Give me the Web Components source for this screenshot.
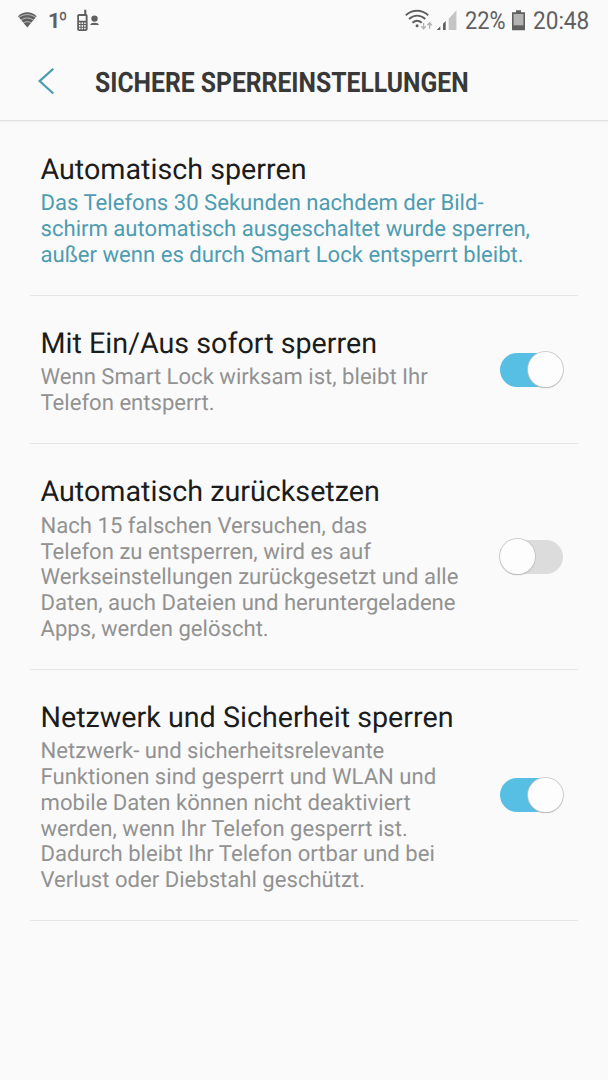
<!DOCTYPE html>
<html lang="de">
<head>
<meta charset="utf-8">
<title>Sichere Sperreinstellungen</title>
<style>
body{margin:0;background:#fafafa;font-family:Roboto,"Liberation Sans",sans-serif;text-rendering:geometricPrecision}
</style>
</head>
<body>
<settings-screen>
  <status-bar></status-bar>
  <title-bar></title-bar>
  <setting-row style="--h:175px;--top:31px;--gap:3px" accent>
    <span slot="title">Automatisch sperren</span>
    Das Telefons 30 Sekunden nachdem der Bild-<br>schirm automatisch ausgeschaltet wurde sperren,<br>außer wenn es durch Smart Lock entsperrt bleibt.
  </setting-row>
  <setting-row style="--h:148px;--top:29.5px">
    <span slot="title">Mit Ein/Aus sofort sperren</span>
    Wenn Smart Lock wirksam ist, bleibt Ihr<br>Telefon entsperrt.
    <toggle-switch slot="control" on></toggle-switch>
  </setting-row>
  <setting-row style="--h:226px;--top:30px">
    <span slot="title">Automatisch zurücksetzen</span>
    Nach 15 falschen Versuchen, das<br>Telefon zu entsperren, wird es auf<br>Werkseinstellungen zurückgesetzt und alle<br>Daten, auch Dateien und heruntergeladene<br>Apps, werden gelöscht.
    <toggle-switch slot="control"></toggle-switch>
  </setting-row>
  <setting-row style="--h:251px;--top:29.5px">
    <span slot="title">Netzwerk und Sicherheit sperren</span>
    Netzwerk- und sicherheitsrelevante<br>Funktionen sind gesperrt und WLAN und<br>mobile Daten können nicht deaktiviert<br>werden, wenn Ihr Telefon gesperrt ist.<br>Dadurch bleibt Ihr Telefon ortbar und bei<br>Verlust oder Diebstahl geschützt.
    <toggle-switch slot="control" on></toggle-switch>
  </setting-row>
</settings-screen>
<script>
function define(name, html, setup) {
  customElements.define(name, class extends HTMLElement {
    constructor() {
      super();
      this.attachShadow({mode: 'open'}).innerHTML = html;
    }
    connectedCallback() { if (setup) setup(this); }
  });
}

// Text condensed horizontally to the width given in its "width" attribute.
define('fit-text', `<style>
:host{display:block;white-space:nowrap;flex:none}
span{display:inline-block;transform-origin:0 50%}
</style><span><slot></slot></span>`, el => {
  const span = el.shadowRoot.querySelector('span');
  const width = Number(el.getAttribute('width'));
  el.style.width = width + 'px';
  span.style.transform = `scaleX(${width / span.offsetWidth})`;
});

define('settings-screen', `<style>
:host{display:block;width:608px;height:1080px;overflow:hidden;background:#fafafa}
</style><slot></slot>`);

define('status-bar', `<style>
:host{display:flex;height:42px;align-items:flex-start;color:#606060}
svg{display:block;flex:none}
.gap{flex:1}
fit-text{line-height:44px;height:42px}
</style>
<svg width="104" height="42" viewBox="0 0 104 42" fill="#606060">
  <path d="M27.300 27.5 18 16.3C23 10.8 31.5 10.8 36.700 16.3Z"/>
  <path d="M18.6 17.6C24 13.600 30.5 13.600 36 17.6M20.7 20.4C25 17.200 29.5 17.200 33.8 20.4M23 23.2C26 21.200 28.4 21.200 31.4 23.2" fill="none" stroke="#fafafa" stroke-width="1" opacity=".6"/>
  <text x="48" y="28" font-size="21.5" font-weight="700" font-family="Roboto" textLength="10">1</text>
  <text x="58.800" y="28" font-size="22.500" font-weight="400" font-family="Roboto" textLength="8.500" lengthAdjust="spacingAndGlyphs">º</text>
  <path d="M84.2 9.7h2.1V14c.8.3 1.3 1 1.3 2V29c0 1.3-.7 2-2 2h-6.4c-1.3 0-2-.7-2-2V16c0-1.300.7-2 2-2h5Z"/>
  <path d="M79 16h6.700v4.800H79ZM79 22.400h1.500v1.700H79Zm2.600 0h1.500v1.700h-1.500Zm2.600 0h1.500v1.700h-1.500ZM79 25.100h1.500v1.700H79Zm2.600 0h1.500v1.700h-1.500Zm2.600 0h1.500v1.700h-1.500ZM79 27.800h1.500v1.500H79Zm2.600 0h1.500v1.500h-1.500Zm2.600 0h1.500v1.500h-1.500Z" fill="#fafafa"/>
  <circle cx="94.500" cy="18.600" r="3.200"/>
  <path d="M90.200 25c.3-1.600 1.600-2.300 4.300-2.300s4.100.7 4.400 2.300Z"/>
</svg>
<div class="gap"></div>
<svg width="60.500" height="42" viewBox="404 0 60.500 42" fill="none">
  <g stroke="#606060" stroke-width="1.900">
    <path d="M405.800 15.200C412.300 9.300 421.700 9.300 428.200 15.200M409 19C414 14.600 420.300 14.600 425.300 19M412.400 22.700C415.500 20 418.700 20 421.800 22.700"/>
  </g>
  <circle cx="417.100" cy="25.700" r="1.500" fill="#606060"/>
  <path d="M423.600 23v5.400M421.400 26.200l2.200 2.500 2.200-2.500M429.600 28.700v-5.500M427.400 25.300l2.200-2.500 2.200 2.500" stroke="#b0b0b0" stroke-width="1.300"/>
  <path d="M436.800 30h3.500v-3.700ZM443 30h2.700v-9L443 23.700Z" fill="#606060"/>
  <path d="M448.700 30h7.700V10.200l-7.700 8.500Z" fill="#c5c5c5"/>
</svg>
<fit-text width="40.500" style="font-size:24.800px">22%</fit-text>
<svg width="27.500" height="42" viewBox="505 0 27.500 42">
  <path d="M516 10.300h5v2h4v18h-13v-18h4Z" fill="#606060"/>
  <path d="M513.600 14h9.800v11.300h-9.800Z" fill="#b3b3b3"/>
</svg>
<fit-text width="56.500" style="font-size:24.800px;margin-right:19px">20:48</fit-text>`);

define('title-bar', `<style>
:host{display:flex;box-sizing:border-box;height:79px;border-bottom:1px solid #e1e1e1;box-shadow:0 1px 1px #f1f1f1;color:#383838}
svg{flex:none}
fit-text{font-size:28px;font-weight:700;line-height:81px;height:78px}
</style>
<svg width="94.500" height="78" viewBox="0 42 94.500 78" fill="none"><path d="M53.300 68.700 39.600 81.100 53.300 93.500" stroke="#4b9bb1" stroke-width="2.200"/></svg>
<fit-text width="374">SICHERE SPERREINSTELLUNGEN</fit-text>`);

define('setting-row', `<style>
:host{display:flex;box-sizing:border-box;height:var(--h);margin:0 30px;padding:0 15px 0 10.500px;border-bottom:1px solid #e6e6e6;align-items:center;justify-content:space-between;color:#929292}
:host([accent]){color:#4e9cb2}
.text{align-self:flex-start;padding-top:var(--top);white-space:nowrap}
.title{font-size:28.700px;line-height:36px;margin-bottom:var(--gap,3.800px);color:#1c1c1c}
.body{font-size:22.100px;line-height:25.800px}
</style>
<div class="text"><div class="title"><slot name="title"></slot></div><div class="body"><slot></slot></div></div>
<slot name="control"></slot>`);

define('toggle-switch', `<style>
:host{display:flex;box-sizing:border-box;width:62.500px;margin-right:.500px;height:34px;border-radius:17px;background:#dcdcdc;align-items:center;flex:none}
:host([on]){background:#56bfe3;justify-content:flex-end}
i{display:block;width:34.500px;height:34.500px;flex:none;border-radius:50%;background:#fdfdfd;box-shadow:0 0 0 .8px #c4c4c4,0 1px 1px #a5a5a5}
</style><i></i>`);
</script>
</body>
</html>
